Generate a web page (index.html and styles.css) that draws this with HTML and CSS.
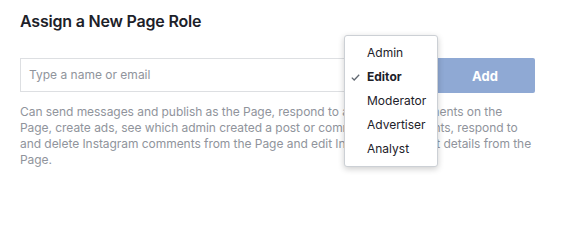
FILE: index.html
```html
<!DOCTYPE html>
<html>
<head>
<meta charset="utf-8">
<link rel="stylesheet" href="styles.css">
</head>
<body>
<div class="panel">
  <h2 class="title">Assign a New Page Role</h2>
  <div class="row">
    <div class="input">Type a name or email</div>
    <button class="add">Add</button>
  </div>
  <p class="desc">Can send messages and publish as the Page, respond to and delete comments on the Page, create ads, see which admin created a post or comment, view insights, respond to and delete Instagram comments from the Page and edit Instagram account details from the Page.</p>
  <ul class="menu">
    <li class="item">Admin</li>
    <li class="item selected"><svg class="check" width="9" height="7" viewBox="0 0 9 7"><path d="M0.8 3.6 L3.2 6 L8.2 0.8" fill="none" stroke="#606770" stroke-width="1.3"/></svg>Editor</li>
    <li class="item">Moderator</li>
    <li class="item">Advertiser</li>
    <li class="item">Analyst</li>
  </ul>
</div>
</body>
</html>
```
FILE: styles.css
```css
html, body {
  margin: 0;
  padding: 0;
  background: #ffffff;
}
.panel {
  position: relative;
  width: 516px;
  min-height: 180px;
  padding: 11px 33px 20px 20px;
  font-family: Inter, "Liberation Sans", Arial, sans-serif;
}
.title {
  margin: 0;
  font-size: 16px;
  line-height: 20px;
  font-weight: 600;
  letter-spacing: -0.2px;
  color: #1d2129;
}
.row {
  display: flex;
  gap: 8px;
  margin-top: 27px;
  margin-right: 1px;
}
.input {
  flex: 1;
  height: 34px;
  box-sizing: border-box;
  border: 1px solid #dddfe2;
  padding: 0 8px;
  font-size: 12px;
  line-height: 32px;
  color: #90949c;
}
.add {
  width: 100px;
  height: 35px;
  border: none;
  border-radius: 2px;
  background: #8fa9d4;
  color: #ffffff;
  font-family: Inter, "Liberation Sans", Arial, sans-serif;
  font-weight: 700;
  font-size: 13px;
  padding: 0;
}
.desc {
  margin: 11px 0 0;
  font-size: 12px;
  line-height: 16px;
  letter-spacing: -0.05px;
  color: #90949c;
}
.menu {
  position: absolute;
  left: 344px;
  top: 35px;
  width: 94px;
  margin: 0;
  padding: 5px 0;
  list-style: none;
  background: #ffffff;
  border: 1px solid #ccd0d5;
  box-sizing: border-box;
  border-radius: 3px;
  box-shadow: 0 2px 6px rgba(0, 0, 0, 0.2);
}
.item {
  position: relative;
  height: 24px;
  line-height: 24px;
  padding-left: 22px;
  font-size: 12px;
  color: #1d2129;
}
.selected {
  font-weight: 700;
}
.check {
  position: absolute;
  left: 6px;
  top: 9px;
}
```
